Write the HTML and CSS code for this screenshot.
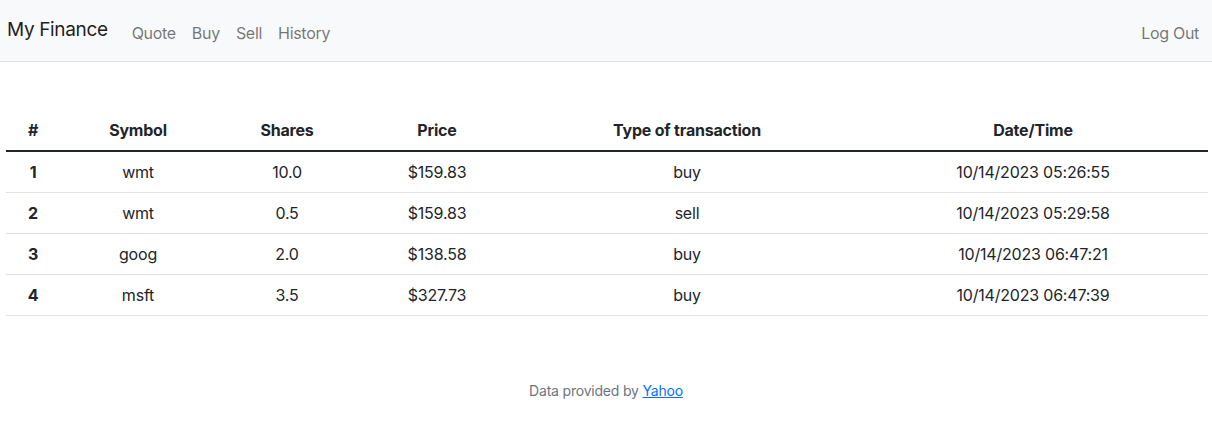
FILE: index.html
```html
<!DOCTYPE html>
<html lang="en">
<head>
<meta charset="utf-8">
<title>My Finance: History</title>
<link rel="stylesheet" href="styles.css">
</head>
<body>
<nav class="navbar">
  <a class="brand" href="#">My Finance</a>
  <ul class="nav-links">
    <li><a href="#">Quote</a></li>
    <li><a href="#">Buy</a></li>
    <li><a href="#">Sell</a></li>
    <li><a href="#">History</a></li>
  </ul>
  <ul class="nav-links nav-right">
    <li><a href="#">Log Out</a></li>
  </ul>
</nav>
<main class="main">
  <table class="history">
    <colgroup>
      <col class="c-num"><col class="c-sym"><col class="c-shares"><col class="c-price"><col class="c-type"><col class="c-date">
    </colgroup>
    <thead>
      <tr><th>#</th><th>Symbol</th><th>Shares</th><th>Price</th><th>Type of transaction</th><th>Date/Time</th></tr>
    </thead>
    <tbody>
      <tr><th>1</th><td>wmt</td><td>10.0</td><td>$159.83</td><td>buy</td><td>10/14/2023 05:26:55</td></tr>
      <tr><th>2</th><td>wmt</td><td>0.5</td><td>$159.83</td><td>sell</td><td>10/14/2023 05:29:58</td></tr>
      <tr><th>3</th><td>goog</td><td>2.0</td><td>$138.58</td><td>buy</td><td>10/14/2023 06:47:21</td></tr>
      <tr><th>4</th><td>msft</td><td>3.5</td><td>$327.73</td><td>buy</td><td>10/14/2023 06:47:39</td></tr>
    </tbody>
  </table>
</main>
<footer class="footer">Data provided by <a href="#">Yahoo</a></footer>
</body>
</html>
```
FILE: styles.css
```css
* { box-sizing: border-box; }
html, body { margin: 0; padding: 0; }
body {
  font-family: Inter, "Noto Sans", "Liberation Sans", sans-serif;
  font-size: 16px;
  line-height: 1.5;
  letter-spacing: -0.2px;
  color: #212529;
  background: #fff;
}
.navbar {
  display: flex;
  align-items: center;
  height: 62px;
  padding: 4px 5px 0 7px;
  background: #f8f9fa;
  border-bottom: 1px solid #dee2e6;
}
.brand {
  font-size: 19px;
  letter-spacing: -0.35px;
  line-height: 30px;
  color: rgba(0,0,0,.9);
  text-decoration: none;
  margin-right: 16px;
  margin-top: -5px;
}
.nav-links {
  display: flex;
  list-style: none;
  margin: 0;
  padding: 0;
}
.nav-links a {
  display: block;
  padding: 0 8px;
  line-height: 24px;
  color: rgba(0,0,0,.55);
  text-decoration: none;
  letter-spacing: -0.3px;
}
.nav-right { margin-left: auto; }
.main {
  padding: 48px 4px 0 6px;
}
.history {
  width: 100%;
  border-collapse: collapse;
  text-align: center;
}
.c-num { width: 54px; }
.c-sym { width: 156px; }
.c-shares { width: 142px; }
.c-price { width: 158px; }
.c-type { width: 342px; }
.c-date { width: 350px; }
.history th, .history td {
  padding: 8px;
  height: 41px;
  border-bottom: 1px solid #dee2e6;
  vertical-align: middle;
}
.history th { font-weight: 700; }
.history thead th {
  border-bottom: 2px solid #212529;
}
.footer {
  margin-top: 64px;
  text-align: center;
  font-size: 14px;
  color: #6c757d;
}
.footer a { color: #0d6efd; }
```
